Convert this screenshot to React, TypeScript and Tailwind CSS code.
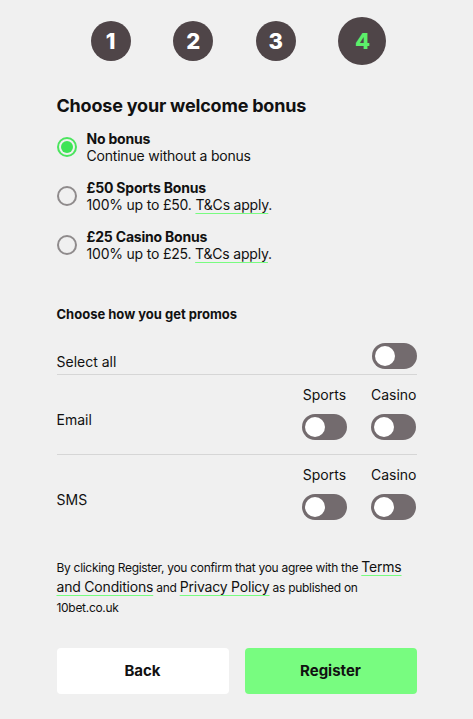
import React from "react";

const font = { fontFamily: "Inter, 'Noto Sans', sans-serif" };

function Toggle() {
  return (
    <div className="w-[45px] h-[26px] rounded-full bg-[#736b6e] p-[3px] flex items-center">
      <div className="w-[20px] h-[20px] rounded-full bg-white" />
    </div>
  );
}

function Radio({ checked }: { checked?: boolean }) {
  return checked ? (
    <div className="w-[20px] h-[20px] rounded-full border-2 border-[#4be55e] flex items-center justify-center shrink-0">
      <div className="w-[12px] h-[12px] rounded-full bg-[#3ee456]" />
    </div>
  ) : (
    <div className="w-[20px] h-[20px] rounded-full border-2 border-[#8f8b8c] shrink-0" />
  );
}

function Link({ children }: { children: React.ReactNode }) {
  return <span className="underline decoration-[#78fc80] underline-offset-[3px]">{children}</span>;
}

function Pair() {
  return (
    <div className="flex gap-[24px]">
      <div className="flex flex-col items-center gap-[11px]">
        <span className="text-[14px] leading-[16px]">Sports</span>
        <Toggle />
      </div>
      <div className="flex flex-col items-center gap-[11px]">
        <span className="text-[14px] leading-[16px]">Casino</span>
        <Toggle />
      </div>
    </div>
  );
}

export default function App() {
  return (
    <div className="min-h-[719px] bg-[#f0f0f0] text-[#111] flex justify-center" style={font}>
      <div className="w-[360px]">
        <div className="flex items-center justify-between px-[34px] h-[82px]">
          {["1", "2", "3"].map((n) => (
            <div key={n} className="w-[40px] h-[40px] rounded-full bg-[#4f4548] text-white font-extrabold text-[22px] flex items-center justify-center">
              {n}
            </div>
          ))}
          <div className="w-[48px] h-[48px] -mr-[4px] rounded-full bg-[#4f4548] text-[#5cf06a] font-extrabold text-[22px] flex items-center justify-center">
            4
          </div>
        </div>

        <h1 className="text-[18px] font-bold mt-[12px] leading-[24px] tracking-[-0.2px]">Choose your welcome bonus</h1>

        <div className="mt-[12px] flex flex-col gap-[15px] tracking-[-0.2px]">
          <div className="flex items-center gap-[10px]">
            <Radio checked />
            <div className="text-[14px] leading-[17px]">
              <div className="font-bold">No bonus</div>
              <div>Continue without a bonus</div>
            </div>
          </div>
          <div className="flex items-center gap-[10px]">
            <Radio />
            <div className="text-[14px] leading-[17px]">
              <div className="font-bold">£50 Sports Bonus</div>
              <div>100% up to £50. <Link>T&amp;Cs apply</Link>.</div>
            </div>
          </div>
          <div className="flex items-center gap-[10px]">
            <Radio />
            <div className="text-[14px] leading-[17px]">
              <div className="font-bold">£25 Casino Bonus</div>
              <div>100% up to £25. <Link>T&amp;Cs apply</Link>.</div>
            </div>
          </div>
        </div>

        <h2 className="text-[13px] font-bold mt-[43px] leading-[18px]">Choose how you get promos</h2>

        <div className="mt-[16px] flex items-center justify-between pb-[2px] border-b border-[#d6d6d6]">
          <span className="text-[14px] mt-[12px]">Select all</span>
          <Toggle />
        </div>

        <div className="flex items-center justify-between pt-[12px] pb-[14px] border-b border-[#d6d6d6]">
          <span className="text-[14px] mt-[12px]">Email</span>
          <Pair />
        </div>

        <div className="flex items-center justify-between pt-[12px] pb-[14px]">
          <span className="text-[14px] mt-[12px]">SMS</span>
          <Pair />
        </div>

        <p className="mt-[24px] text-[12px] leading-[20px] tracking-[-0.3px]">
          By clicking Register, you confirm that you agree with the{" "}
          <span className="text-[14px] leading-[16px] tracking-[-0.2px]"><Link>Terms and Conditions</Link></span> and{" "}
          <span className="text-[14px] leading-[16px] tracking-[-0.2px]"><Link>Privacy Policy</Link></span> as published on 10bet.co.uk
        </p>

        <div className="mt-[30px] flex gap-[16px]">
          <button className="flex-1 h-[46px] rounded-[4px] bg-white text-[15px] font-bold">Back</button>
          <button className="flex-1 h-[46px] rounded-[4px] bg-[#78fc80] text-[15px] font-bold">Register</button>
        </div>
      </div>
    </div>
  );
}
